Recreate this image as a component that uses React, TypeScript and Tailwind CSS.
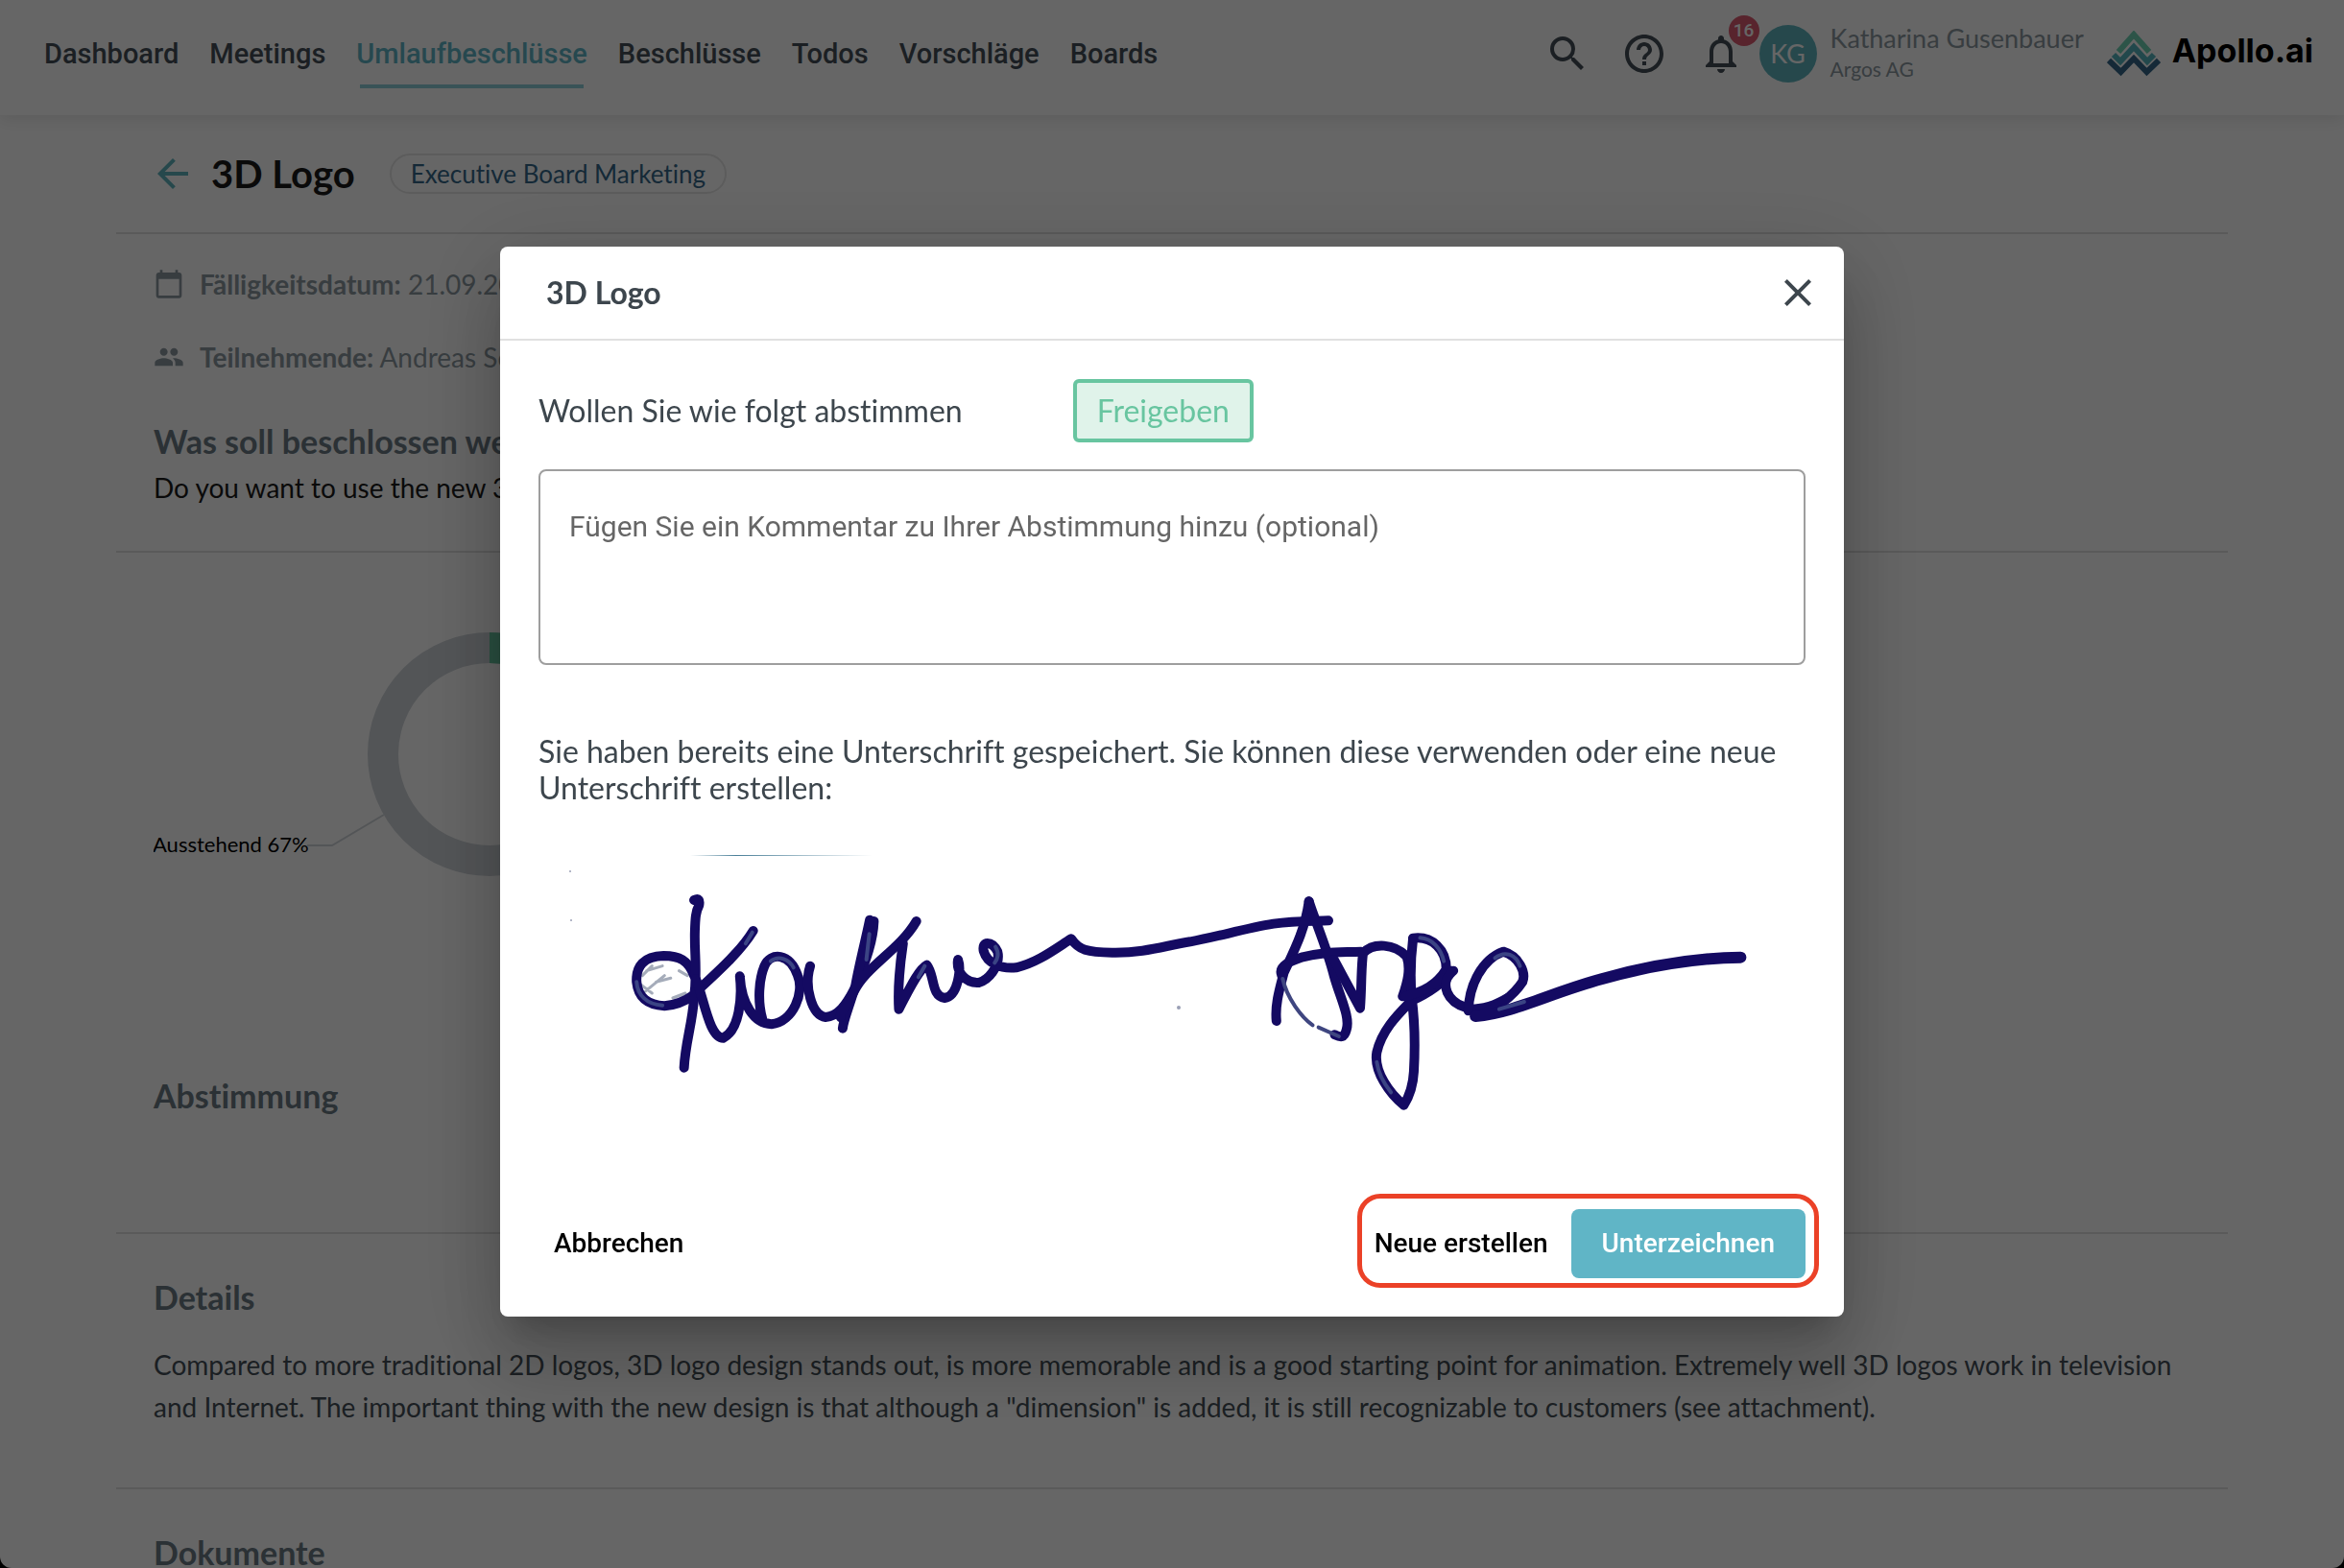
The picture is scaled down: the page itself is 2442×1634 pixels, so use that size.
import { useState } from "react";
import {
  MdArrowBack,
  MdCalendarToday,
  MdClose,
  MdHelpOutline,
  MdNotificationsNone,
  MdPeople,
  MdSearch,
} from "react-icons/md";

const links = [
  "Dashboard",
  "Meetings",
  "Umlaufbeschlüsse",
  "Beschlüsse",
  "Todos",
  "Vorschläge",
  "Boards",
];

function Logo() {
  return (
    <a href="#" className="flex items-center gap-3 text-black">
      <svg width="56" height="48" viewBox="0 0 56 48" fill="none" strokeWidth="6">
        <path d="M12 22 28 4 44 22" stroke="#6fd3b4" />
        <path d="M7 25 14 32 28 17 42 32 49 25" stroke="#55b4bd" />
        <path d="M2 31 14.500 43 28 29 41.500 43 54 31" stroke="#35688a" />
      </svg>
      <span className="pb-1.5 text-[34px] leading-10 font-bold font-['Inter',sans-serif]">Apollo.ai</span>
    </a>
  );
}

function Navbar() {
  return (
    <header className="flex h-[120px] shrink-0 items-start justify-between bg-white pl-[46px] pr-8 pt-[26px] shadow-[0_4px_16px_rgba(0,0,0,0.1)]">
      <nav className="flex gap-8 pt-2 font-['Roboto',sans-serif] text-[29px] leading-11 font-medium text-[#454f57]">
        {links.map((link) => (
          <a key={link} href="#" className={link === "Umlaufbeschlüsse" ? "text-[#60b5c6]" : ""}>
            {link}
            {link === "Umlaufbeschlüsse" && <span className="mx-1 mt-2.5 block h-1 bg-[#8fd0da]" />}
          </a>
        ))}
      </nav>
      <div className="flex h-[60px] items-center">
        <div className="flex gap-8 text-[#454f57]">
          <button aria-label="Suche">
            <MdSearch size={48} />
          </button>
          <button aria-label="Hilfe">
            <MdHelpOutline size={48} />
          </button>
          <button aria-label="Benachrichtigungen" className="relative">
            <MdNotificationsNone size={48} />
            <span className="absolute -right-4 -top-4 flex size-8 items-center justify-center rounded-full bg-[#dc5a70] font-['Roboto',sans-serif] text-[19px] font-medium text-white">
              16
            </span>
          </button>
        </div>
        <span className="ml-4 flex size-[60px] items-center justify-center rounded-full bg-[#60b5bf] text-[27px] text-white">
          KG
        </span>
        <div className="ml-3.5 mr-6 text-[#8c99a1]">
          <p className="text-[27px] leading-8">Katharina Gusenbauer</p>
          <p className="text-[21px] leading-8">Argos AG</p>
        </div>
        <Logo />
      </div>
    </header>
  );
}

function VoteChart() {
  return (
    <svg width="800" height="360" viewBox="0 0 800 360" className="block">
      <circle cx="350" cy="186" r="111" fill="none" stroke="#d0d5da" strokeWidth="32" />
      <path d="M350 75a111 111 0 0 1 96 166.500" fill="none" stroke="#67c5a0" strokeWidth="32" />
      <path d="M240 249 186 281H160" fill="none" stroke="#d0d5da" strokeWidth="2" />
      <text x="-1" y="288" className="text-[22px]">
        Ausstehend 67%
      </text>
    </svg>
  );
}

function Resolution() {
  return (
    <main className="mx-[121px] text-[28px] text-[#454f57]">
      <div className="flex h-[124px] items-center border-b-2 border-[#e0e0e0] pl-[35px]">
        <a href="#" aria-label="Zurück" className="text-[#60b5bf]">
          <MdArrowBack size={48} />
        </a>
        <h1 className="ml-4 text-[40px] font-bold text-[#1a1a1a]">3D Logo</h1>
        <span className="ml-9 flex h-[42px] items-center rounded-full border-2 border-[#e6e6e6] px-5 text-[26px] text-[#35688a]">
          Executive Board Marketing
        </span>
      </div>
      <section className="h-[332px] border-b-2 border-[#e0e0e0] px-[39px] pt-[30px]">
        <div className="flex h-11 items-center gap-4 text-[#8c99a1]">
          <MdCalendarToday size={32} />
          <p>
            <b>Fälligkeitsdatum:</b> 21.09.2023
          </p>
        </div>
        <div className="mt-8 flex h-11 items-center gap-4 text-[#8c99a1]">
          <MdPeople size={32} />
          <p>
            <b>Teilnehmende:</b> Andreas Schmidt
          </p>
        </div>
        <h2 className="mt-11 text-[34px] leading-11 font-bold text-[#6b7a84]">Was soll beschlossen werden?</h2>
        <p className="mt-1 leading-11 text-[#1a1a1a]">Do you want to use the new 3D Logo?</p>
      </section>
      <section className="h-[710px] border-b-2 border-[#e0e0e0] px-[39px] pt-6">
        <VoteChart />
        <h2 className="mt-40 text-[34px] leading-11 font-bold text-[#6b7a84]">Abstimmung</h2>
      </section>
      <section className="h-[266px] border-b-2 border-[#e0e0e0] px-[39px] pt-11">
        <h2 className="text-[34px] leading-11 font-bold text-[#6b7a84]">Details</h2>
        <p className="mt-[26px] leading-11">
          Compared to more traditional 2D logos, 3D logo design stands out, is more memorable and is a good starting
          point for animation. Extremely well 3D logos work in television and Internet. The important thing with the new
          design is that although a "dimension" is added, it is still recognizable to customers (see attachment).
        </p>
      </section>
      <section className="px-[39px] pt-11">
        <h2 className="text-[34px] leading-11 font-bold text-[#6b7a84]">Dokumente</h2>
      </section>
    </main>
  );
}

const strokes = [
  "M376 470C362 422 340 408 303 408 255 410 236 440 238 490 242 540 265 562 305 565 335 562 360 545 376 530",
  "M376 234C388 226 390 236 388 250 380 270 379 290 378 330 376 400 385 450 376 540 372 620 355 680 352 758",
  "M518 330C490 390 440 450 394 505",
  "M380 480C400 540 412 665 446 665 485 640 492 540 486 472 490 560 520 620 562 622 615 615 642 520 625 470 606 398 560 395 545 440 532 480 528 550 540 605",
  "M655 440C640 500 658 595 692 600 722 598 742 560 760 515",
  "M808 300C806 360 790 420 768 490",
  "M798 296C788 360 772 440 764 500 748 570 735 610 733 635",
  "M910 300C870 390 790 440 760 520 745 560 725 580 728 600",
  "M878 370C870 440 865 510 868 575 890 520 915 450 935 437 955 470 945 535 978 540 1010 535 1018 450 1010 420 1005 460 1030 495 1060 492 1090 480 1112 430 1105 395 1092 360 1065 360 1072 395 1080 430 1110 450 1150 445 1200 430 1240 390 1282 355 1300 390 1320 398 1380 398 1460 400 1510 375 1568 364 1630 350 1700 322 1768 308 1818 298 1860 300 1900 298",
  "M1853 238C1843 330 1818 390 1793 460 1783 510 1771 560 1775 612",
  "M1853 238C1868 300 1898 390 1913 470 1928 540 1953 600 1943 640 1938 665 1930 664 1915 655",
  "M1788 470C1778 440 1808 425 1838 412 1888 395 1928 398 1978 395",
  "M1913 420C1938 480 1963 540 1976 572 1980 500 1978 450 1983 400 2008 365 2058 370 2088 410 2098 450 2090 490 2078 535",
  "M2103 355C2096 430 2096 480 2100 540 2108 620 2108 700 2105 770 2103 820 2093 850 2081 875 2048 840 2008 770 2016 710 2028 640 2068 590 2098 550 2148 520 2178 490 2196 455",
  "M2103 353C2150 345 2183 390 2183 450 2160 500 2128 520 2085 535",
  "M2200 455C2165 490 2180 560 2248 575 2290 570 2310 555 2330 540",
  "M2236 580C2238 500 2268 420 2320 395 2358 410 2375 460 2366 490 2346 530 2300 580 2253 597",
];

// Places where the pen left less ink
const faded = [
  "M238 490C240 530 262 560 300 563",
  "M516 335 500 370",
  "M560 425C580 405 605 420 615 445",
  "M797 340 790 420",
  "M930 440 915 475",
  "M1100 380C1110 400 1105 420 1098 430",
  "M2120 352C2150 355 2170 385 2177 425",
  "M2300 415C2325 390 2350 405 2360 440",
  "M2016 740C2020 780 2035 810 2050 835",
  "M2310 575 2370 552",
];

// Ink is traced on its own grid and scaled to the width of the dialog
function Signature() {
  return (
    <svg viewBox="0 0 1320 320" className="block w-full" role="img" aria-label="Unterschrift">
      <defs>
        <linearGradient id="edge">
          <stop offset="0" stopColor="#4a7f98" stopOpacity="0" />
          <stop offset="0.25" stopColor="#4a7f98" />
          <stop offset="1" stopColor="#4a7f98" stopOpacity="0" />
        </linearGradient>
      </defs>
      <rect x="158" y="31" width="190" height="1" fill="url(#edge)" />
      <g
        transform="translate(-1 0) scale(0.4337 0.3333)"
        fill="none"
        stroke="#140a62"
        strokeLinecap="round"
        strokeLinejoin="round"
      >
        <path
          d="M262 455 300 440M252 470 275 440M258 520 305 470M250 500 275 525M285 490 320 478M325 540 355 525M340 455 360 470"
          stroke="#a5acba"
          strokeWidth="3"
          vectorEffect="non-scaling-stroke"
        />
        {strokes.map((d) => (
          <path key={d} d={d} strokeWidth="10" vectorEffect="non-scaling-stroke" />
        ))}
        <path
          d="M2253 597C2350 585 2430 525 2558 480 2668 440 2788 415 2890 413"
          strokeWidth="12"
          vectorEffect="non-scaling-stroke"
        />
        <path
          d="M1790 480C1800 540 1835 600 1862 625M1876 632 1925 660"
          stroke="#3f4680"
          strokeWidth="4"
          vectorEffect="non-scaling-stroke"
        />
        {faded.map((d) => (
          <path key={d} d={d} stroke="#3b4484" strokeWidth="4" vectorEffect="non-scaling-stroke" />
        ))}
      </g>
      <g fill="#9a9fb5">
        <circle cx="667" cy="190" r="2" />
        <circle cx="34" cy="99" r="1" />
        <circle cx="33" cy="48" r="1" />
      </g>
    </svg>
  );
}

function SignDialog() {
  const [comment, setComment] = useState("");

  return (
    <div
      role="dialog"
      aria-labelledby="dialog-title"
      className="w-full max-w-[1400px] rounded-lg bg-white text-[32px] text-[#3d464d] shadow-[0_22px_30px_-14px_rgba(0,0,0,0.2),0_48px_76px_6px_rgba(0,0,0,0.14),0_18px_92px_16px_rgba(0,0,0,0.12)]"
    >
      <div className="flex h-[98px] items-center justify-between border-b-2 border-[#e0e0e0] pl-12 pr-6">
        <h2 id="dialog-title" className="font-bold">
          3D Logo
        </h2>
        <button aria-label="Schließen">
          <MdClose size={48} />
        </button>
      </div>
      <div className="px-10 pb-10 pt-10">
        <div className="flex items-center gap-[115px]">
          <p>Wollen Sie wie folgt abstimmen</p>
          <span className="flex h-[66px] items-center rounded-md border-4 border-[#68c5a0] bg-[#e0f3ea] px-[21px] text-[#68c5a0]">
            Freigeben
          </span>
        </div>
        <textarea
          aria-label="Kommentar"
          value={comment}
          onChange={(e) => setComment(e.target.value)}
          placeholder="Fügen Sie ein Kommentar zu Ihrer Abstimmung hinzu (optional)"
          className="mt-7 block h-[204px] w-full resize-none rounded-lg border-2 border-[#9e9e9e] px-[30px] py-10 font-['Roboto',sans-serif] text-[30px] leading-9 outline-none placeholder:text-[#666]"
        />
        <p className="mb-10 mt-[71px] leading-[38px]">
          Sie haben bereits eine Unterschrift gespeichert. Sie können diese verwenden oder eine neue Unterschrift
          erstellen:
        </p>
        <div className="-mt-5">
          <Signature />
        </div>
        <div className="mt-20 flex items-center justify-between font-['Roboto',sans-serif] text-[28px] font-medium text-black">
          <button className="h-[72px] px-4">Abbrechen</button>
          <div className="relative flex items-center">
            <button className="h-[72px] px-6">Neue erstellen</button>
            <button className="h-[72px] rounded-lg bg-[#60b5c6] px-8 text-white">Unterzeichnen</button>
            <span className="pointer-events-none absolute -bottom-2.5 -right-3.5 -top-4 left-1.5 rounded-3xl border-5 border-[#eb4127]" />
          </div>
        </div>
      </div>
    </div>
  );
}

export default function App() {
  return (
    <div className="h-screen bg-black font-['Lato',sans-serif] [font-variant-ligatures:no-common-ligatures]">
      <div className="h-full overflow-hidden rounded-b-xl bg-white">
        <Navbar />
        <Resolution />
      </div>
      <div className="fixed inset-0 flex items-center justify-center bg-black/60 pb-1.5">
        <SignDialog />
      </div>
    </div>
  );
}
